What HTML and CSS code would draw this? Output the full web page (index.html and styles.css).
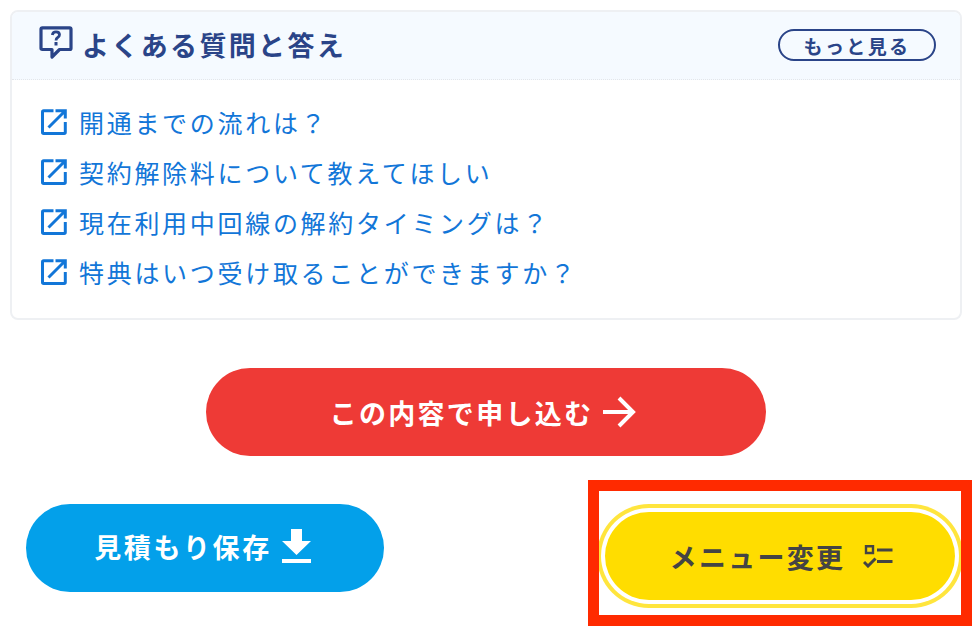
FILE: index.html
```html
<!DOCTYPE html>
<html lang="ja">
<head>
<meta charset="utf-8">
<title>よくある質問と答え</title>
<link rel="stylesheet" href="styles.css">
</head>
<body>
<main class="page">
  <section class="faq">
    <header class="faq-head">
      <h2 class="faq-title">
        <svg class="faq-icon" viewBox="0 0 34 34" fill="none" stroke="#2a4488" stroke-width="3.2" stroke-linejoin="round"><path d="M3.300 1.800H30.700Q32 1.800 32 3.100V22.200Q32 23.500 30.700 23.500H20.500L13 31V23.500H3.300Q2 23.500 2 22.200V3.100Q2 1.800 3.300 1.800Z"/><path d="M13.300 9Q13.800 5.800 17 5.800Q20.500 5.800 20.500 8.800Q20.500 10.500 18.700 11.500Q17 12.500 17 14.500" stroke-width="2.800" stroke-linejoin="miter"/><path d="M17 16V19.500" stroke-width="3"/></svg>
        <span>よくある質問と答え</span>
      </h2>
      <a class="more" href="#">もっと見る</a>
    </header>
    <ul class="faq-list">
      <li class="faq-item"><svg class="ext" viewBox="0 0 26 26" fill="none" stroke="#1276d8" stroke-width="3"><path d="M12.500 1.700H2.700Q1.500 1.700 1.500 2.900V23.300Q1.500 24.500 2.700 24.500H23.100Q24.300 24.500 24.300 23.300V13"/><path d="M7.500 18.500L23.500 2.500M14.500 1.700H24.300V9.500"/></svg><a href="#">開通までの流れは？</a></li>
      <li class="faq-item"><svg class="ext" viewBox="0 0 26 26" fill="none" stroke="#1276d8" stroke-width="3"><path d="M12.500 1.700H2.700Q1.500 1.700 1.500 2.900V23.300Q1.500 24.500 2.700 24.500H23.100Q24.300 24.500 24.300 23.300V13"/><path d="M7.500 18.500L23.500 2.500M14.500 1.700H24.300V9.500"/></svg><a href="#">契約解除料について教えてほしい</a></li>
      <li class="faq-item"><svg class="ext" viewBox="0 0 26 26" fill="none" stroke="#1276d8" stroke-width="3"><path d="M12.500 1.700H2.700Q1.500 1.700 1.500 2.900V23.300Q1.500 24.500 2.700 24.500H23.100Q24.300 24.500 24.300 23.300V13"/><path d="M7.500 18.500L23.500 2.500M14.500 1.700H24.300V9.500"/></svg><a href="#">現在利用中回線の解約タイミングは？</a></li>
      <li class="faq-item"><svg class="ext" viewBox="0 0 26 26" fill="none" stroke="#1276d8" stroke-width="3"><path d="M12.500 1.700H2.700Q1.500 1.700 1.500 2.900V23.300Q1.500 24.500 2.700 24.500H23.100Q24.300 24.500 24.300 23.300V13"/><path d="M7.500 18.500L23.500 2.500M14.500 1.700H24.300V9.500"/></svg><a href="#">特典はいつ受け取ることができますか？</a></li>
    </ul>
  </section>

  <div class="apply-row">
    <a class="btn btn-apply" href="#">この内容で申し込む
      <svg class="arrow" viewBox="0 0 34 32" fill="none" stroke="#fff" stroke-width="4"><path d="M1 16H31M17 2L31 16L17 30"/></svg>
    </a>
  </div>

  <div class="sub-row">
    <a class="btn btn-save" href="#">見積もり保存
      <svg class="dl" viewBox="0 0 29 34" fill="#fff"><path d="M9 0H20V12H29L14.500 26L0 12H9Z"/><path d="M0 30H29V34H0Z"/></svg>
    </a>
    <a class="btn btn-change" href="#">メニュー変更
      <svg class="chk" viewBox="0 0 30 23" fill="none" stroke="#444"><path d="M3 1.200H10V8H3Z" stroke-width="2.400"/><path d="M14 5H29.500M14 16.500H29.500" stroke-width="3.200"/><path d="M1 17L5 21L12.500 13.500" stroke-width="3"/></svg>
    </a>
  </div>
</main>
<div class="highlight"></div>
</body>
</html>
```

FILE: styles.css
```css
* { box-sizing: border-box; }
html, body { margin: 0; padding: 0; background: #fff; }
body { font-family: "Noto Sans CJK JP", "Noto Sans", sans-serif; width: 976px; height: 642px; overflow: hidden; position: relative; }
.page { width: 972px; padding: 10px 10px 0; }

.faq { border: 2px solid #eef0f3; border-radius: 8px; height: 310px; overflow: hidden; background: #fff; }
.faq-head { height: 68px; background: #f5faff; border-bottom: 1px dotted #e3e6ea; display: flex; align-items: center; justify-content: space-between; padding: 0 24px 1px 27px; }
.faq-title { margin: -2px 0 0; display: flex; align-items: center; gap: 9px; font-size: 27px; font-weight: 700; letter-spacing: 2.35px; color: #2a4488; line-height: 1; }
.faq-icon { width: 34px; height: 34px; display: block; margin-top: -2px; }
.more { width: 158px; height: 32px; border: 2px solid #2a4488; border-radius: 16px; display: flex; align-items: center; justify-content: center; font-size: 19px; font-weight: 700; letter-spacing: 2.4px; color: #2a4488; text-decoration: none; }

.faq-list { list-style: none; margin: 0; padding: 17px 0 0 29px; }
.faq-item { height: 50px; display: flex; align-items: center; gap: 12px; }
.faq-item a { font-size: 25px; letter-spacing: 2.7px; color: #1276d8; text-decoration: none; line-height: 1; }
.ext { width: 26px; height: 26px; display: block; flex: none; }

.btn { display: flex; align-items: center; justify-content: center; height: 88px; border-radius: 44px; text-decoration: none; font-weight: 700; font-size: 27px; letter-spacing: 2.3px; line-height: 1; }
.apply-row { display: flex; justify-content: center; margin-top: 48px; }
.btn-apply { width: 560px; background: #ee3a36; color: #fff; gap: 9px; padding-right: 6px; }
.arrow { width: 34px; height: 32px; display: block; }

.sub-row { display: flex; justify-content: space-between; align-items: flex-start; margin-top: 48px; padding: 0 7px 0 16px; }
.btn-save { width: 358px; background: #03a0ea; color: #fff; gap: 10px; padding: 0 5px 4px 0; letter-spacing: 2.6px; }
.dl { width: 29px; height: 34px; display: block; }
.btn-change { width: 350px; margin-top: 8px; background: #ffdd00; color: #444; gap: 18px; padding-left: 3px; box-shadow: 0 0 0 4px #fff, 0 0 0 8px #ffe53d; }
.chk { width: 30px; height: 23px; display: block; }

.highlight { position: absolute; left: 588px; top: 480px; width: 384px; height: 146px; border: 11px solid #ff2a00; pointer-events: none; }
```
